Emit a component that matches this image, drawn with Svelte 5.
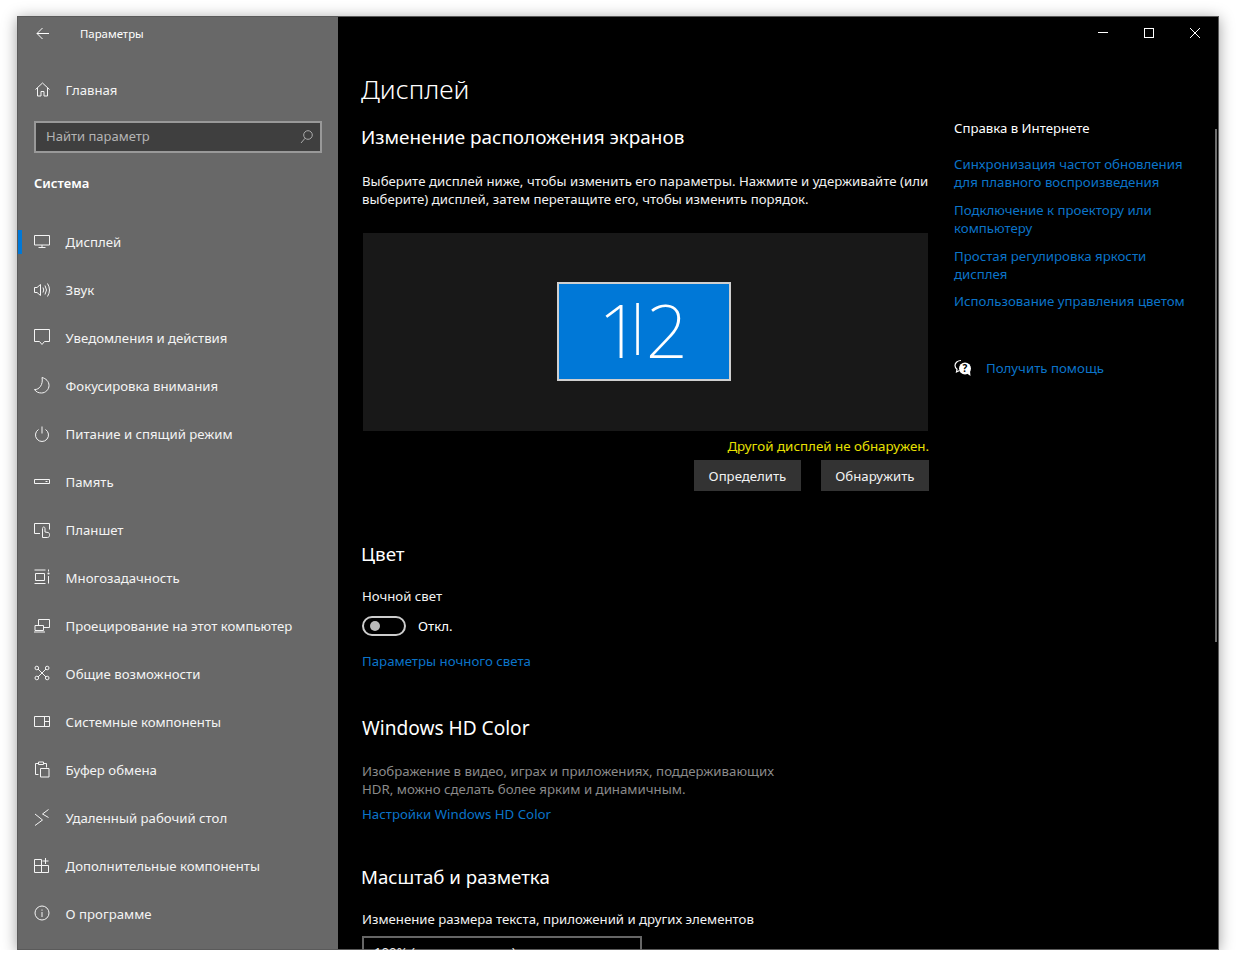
<script>
  const items = [
    { label: 'Дисплей', icon: 'display', active: true },
    { label: 'Звук', icon: 'sound' },
    { label: 'Уведомления и действия', icon: 'notify' },
    { label: 'Фокусировка внимания', icon: 'moon' },
    { label: 'Питание и спящий режим', icon: 'power' },
    { label: 'Память', icon: 'storage' },
    { label: 'Планшет', icon: 'tablet' },
    { label: 'Многозадачность', icon: 'multi' },
    { label: 'Проецирование на этот компьютер', icon: 'project' },
    { label: 'Общие возможности', icon: 'shared' },
    { label: 'Системные компоненты', icon: 'comps' },
    { label: 'Буфер обмена', icon: 'clip' },
    { label: 'Удаленный рабочий стол', icon: 'remote' },
    { label: 'Дополнительные компоненты', icon: 'extra' },
    { label: 'О программе', icon: 'info' }
  ];
  const paths = {
    display: 'M1.5 2.5h15v9.500h-15zM9 12v2.500M5.500 14.500h7',
    sound: 'M1.500 6.500h2.500l3.500-3v11l-3.500-3h-2.500zM10 6.500q1.500 2.500 0 5M12 4.500q3 4.500 0 9M14.500 2.500q4 6.500 0 13',
    notify: 'M1.500 .5h15v12h-5l-2.500 3-2.500-3h-5z',
    moon: 'M9 .5c4 1 7 4 7 8 0 4-3.500 7.500-7.500 7.500-3 0-5.500-1-7-3.500 4.500 .5 9-5 7.500-12z',
    power: 'M9 1.500v7M5.500 4.500a6.500 6.500 0 1 0 7 0',
    storage: 'M1.500 6.500h15v4h-15zM12.500 8.500h2',
    tablet: 'M7 12.500h-5.500v-10h15v6M9.500 16.500v-9c0-2 2.500-2 2.500 0v3.500l3 .5c1 .2 1.500 1 1.500 2v1c0 1-.8 2-2 2z',
    multi: 'M1.500 1h11M1.500 14.500h11M2.500 4.500h9v7h-9zM15.500 .5v2M15.500 7v7.500',
    project: 'M5.500 8v-5.500h11v8h-5.500M2 8.500h8.500v5h-8.500zM1 15h11',
    shared: 'M5 4l8 8M13 4l-8 8',
    comps: 'M1.500 3.500h15v10h-15zM11.500 3.500v10M11.500 8.500h5',
    clip: 'M5.500 13.500h-3v-11h3M10.500 2.500h3v4M5.500 3.500v-2.500h5v2.500zM7.500 7.500h8.500v8.500h-8.500z',
    remote: 'M2 5l7.500 6-7.500 5.500M15.500 .5l-6 4.500 6 3.500',
    extra: 'M1.500 2.500h7v6h-7zM1.500 8.500h7v7h-7zM8.500 8.500h7v7h-7zM12.500 1v6M9.500 4h6',
    info: 'M9 7v5M9 4.500v1.200'
  };
</script>

{#snippet icon(name)}
  <svg class="ico" width="18" height="18" viewBox="0 0 18 18" fill="none" stroke="currentColor" stroke-width="1">
    <path d={paths[name]} />
    {#if name === 'info'}<circle cx="9" cy="8" r="7" />{/if}
    {#if name === 'shared'}
      <circle cx="3.800" cy="3" r="1.800" /><circle cx="14.200" cy="3" r="1.800" /><circle cx="3.800" cy="13" r="1.800" /><circle cx="14.200" cy="13" r="1.800" />
    {/if}
    {#if name === 'multi'}<circle cx="15.500" cy="4.500" r="1.100" fill="currentColor" stroke="none" />{/if}
  </svg>
{/snippet}

<div class="window">
  <aside class="side">
    <div class="titlebar">
      <svg class="back" width="16" height="16" viewBox="0 0 16 16" fill="none" stroke="currentColor"><path d="M14 7.500H2M7.500 2L2 7.500 7.500 13" /></svg>
      <span>Параметры</span>
    </div>
    <div class="row home">
      <svg class="ico" width="18" height="18" viewBox="0 0 18 18" fill="none" stroke="currentColor"><path d="M2.500 8.500L9.500 2l7 6.500M4.500 7v8h3.500v-4.500h3v4.500h3.500v-8" /></svg>
      <span>Главная</span>
    </div>
    <div class="search">
      <span>Найти параметр</span>
      <svg width="16" height="16" viewBox="0 0 16 16" fill="none" stroke="currentColor"><circle cx="11" cy="6" r="4.300" /><path d="M8 9.300L4 14" /></svg>
    </div>
    <div class="group">Система</div>
    <nav>
      {#each items as it}
        <div class="row" class:active={it.active}>
          {@render icon(it.icon)}
          <span>{it.label}</span>
        </div>
      {/each}
    </nav>
  </aside>

  <main class="main">
    <div class="controls">
      <svg width="12" height="12" viewBox="0 0 12 12" stroke="currentColor" fill="none"><path d="M1 5.500h10" /></svg>
      <svg width="12" height="12" viewBox="0 0 12 12" stroke="currentColor" fill="none"><rect x="1.500" y="1.500" width="9" height="9" /></svg>
      <svg width="12" height="12" viewBox="0 0 12 12" stroke="currentColor" fill="none"><path d="M1 1l10 10M11 1L1 11" /></svg>
    </div>
    <div class="scrollbar"></div>
    <div class="cols">
      <section class="content">
        <h1>Дисплей</h1>
        <h2 class="first">Изменение расположения экранов</h2>
        <p class="intro">Выберите дисплей ниже, чтобы изменить его параметры. Нажмите и удерживайте (или<br />выберите) дисплей, затем перетащите его, чтобы изменить порядок.</p>
        <div class="stage"><div class="monitor"><span>1</span><span class="bar">|</span><span>2</span></div></div>
        <div class="warn">Другой дисплей не обнаружен.</div>
        <div class="buttons">
          <button>Определить</button>
          <button>Обнаружить</button>
        </div>
        <h2 class="color">Цвет</h2>
        <div class="label night">Ночной свет</div>
        <div class="toggle-row">
          <span class="toggle"><i></i></span>
          <span>Откл.</span>
        </div>
        <a class="link nl">Параметры ночного света</a>
        <h2 class="hd">Windows HD Color</h2>
        <p class="muted">Изображение в видео, играх и приложениях, поддерживающих<br />HDR, можно сделать более ярким и динамичным.</p>
        <a class="link hl">Настройки Windows HD Color</a>
        <h2 class="scale">Масштаб и разметка</h2>
        <div class="label sl">Изменение размера текста, приложений и других элементов</div>
        <div class="select">
          <span>100% (рекомендуется)</span>
          <svg width="12" height="8" viewBox="0 0 12 8" fill="none" stroke="#ddd"><path d="M1 1l5 5 5-5" /></svg>
        </div>
      </section>
      <section class="help">
        <div class="help-title">Справка в Интернете</div>
        <a class="link">Синхронизация частот обновления для плавного воспроизведения</a>
        <a class="link">Подключение к проектору или компьютеру</a>
        <a class="link tight">Простая регулировка яркости дисплея</a>
        <a class="link">Использование управления цветом</a>
        <div class="get">
          <svg width="18" height="18" viewBox="0 0 18 18"><path d="M7 1.500c-3.300 0-6 2.200-6 5 0 1.500.8 2.800 2 3.700L2.500 13l3-1.500" fill="none" stroke="#fff" stroke-width="1.200" /><circle cx="11" cy="9.500" r="6" fill="#fff" /><path d="M13 14.500l3.500 2.500-.5-5z" fill="#fff" /><text x="11" y="13" font-size="10" font-weight="700" text-anchor="middle" fill="#000" font-family="Noto Sans">?</text></svg>
          <a class="link">Получить помощь</a>
        </div>
      </section>
    </div>
  </main>
</div>

<style>
  :global(body) { background: #fff; }
  * { box-sizing: border-box; }
  .window {
    display: flex;
    width: 1202px;
    height: 934px;
    margin: 16px 0 0 17px;
    overflow: hidden;
    background: #000;
    color: #fff;
    font-family: "Noto Sans", sans-serif;
    font-size: 13.200px;
    box-shadow: 0 2px 14px rgba(0, 0, 0, .38);
    outline: 1px solid #5a5a5a;
    outline-offset: -1px;
  }
  .side { width: 321px; flex: none; background: #686868; }
  .titlebar { display: flex; align-items: center; height: 34px; padding: 1px 0 0 18px; gap: 29px; font-size: 11.400px; }
  .back { flex: none; }
  .row { display: flex; align-items: center; height: 48px; padding-left: 16px; gap: 14.600px; position: relative; color: #f4f4f4; }
  .row.active::before { content: ''; position: absolute; left: 1px; top: 12px; width: 4px; height: 24px; background: #0078d7; }
  .ico { flex: none; }
  .home { margin-top: 16px; }
  .search {
    display: flex; justify-content: space-between; align-items: center;
    margin: 7px 0 0 17px; width: 288px; height: 32px; padding: 0 7px 2px 10px;
    background: #3f3f3f; border: 2px solid #999; color: #b4b4b4; font-size: 13px;
  }
  .search svg { color: #aaa; margin-top: 2px; }
  .group { margin-top: 20px; padding-left: 17px; font-weight: 600; font-size: 13px; height: 20px; line-height: 20px; }
  nav { margin-top: 25px; }
  .main { flex: 1; position: relative; overflow: hidden; }
  .controls { position: absolute; top: 11px; right: 18px; display: flex; gap: 34px; }
  .scrollbar { position: absolute; right: 2px; top: 113px; width: 2px; height: 513px; background: #6e6e6e; }
  .cols { display: flex; padding: 0 0 0 24px; }
  .content { width: 567px; flex: none; }
  h1 { margin: 53px 0 0 -1px; font-size: 26.500px; font-weight: 300; line-height: 40px; }
  h2 { margin: 0 0 0 -1px; font-size: 18.900px; font-weight: 400; line-height: 28px; }
  .first { margin-top: 14px; }
  .intro { margin: 21px 0 0; line-height: 18px; white-space: nowrap; color: #f2f2f2; letter-spacing: .03px; }
  .stage { margin: 25px 0 0 1px; width: 565px; height: 198px; background: #181818; display: flex; justify-content: center; padding: 49px 3px 0 0; }
  .monitor { width: 174px; height: 99px; background: #0078d7; border: 2px solid #cfcfcf; display: flex; align-items: center; justify-content: center; padding: 0 2px 4px 0; font-size: 74px; font-weight: 200; line-height: 1; }
  .bar { font-size: 52px; font-weight: 300; margin: 0 -6px 0 -17px; transform: translateY(-8px); }
  .warn { margin-top: 6px; text-align: right; color: #e8e000; line-height: 18px; font-size: 13.350px; }
  .buttons { display: flex; justify-content: flex-end; gap: 20px; margin-top: 5px; }
  button { height: 31px; padding: 0 14.500px; border: 0; background: #333; color: #f2f2f2; font: inherit; }
  .color { margin-top: 49px; }
  .label { line-height: 18px; color: #f2f2f2; }
  .night { margin-top: 19px; }
  .toggle-row { display: flex; align-items: center; gap: 12px; margin-top: 11px; height: 20px; }
  .toggle { width: 44px; height: 20px; border: 2px solid #ccc; border-radius: 10px; display: flex; align-items: center; padding-left: 6px; }
  .toggle i { width: 10px; height: 10px; border-radius: 50%; background: #bbb; }
  .link { display: block; color: #0b74c9; line-height: 18px; font-size: 13.250px; }
  .nl { margin-top: 16px; }
  .hd { margin: 44px 0 0; font-size: 19.100px; }
  .muted { margin: 20px 0 0; line-height: 18px; color: #8a8a8a; font-size: 13.250px; }
  .hl { margin-top: 7px; }
  .scale { margin-top: 40px; font-size: 18.700px; }
  .sl { margin-top: 19px; }
  .select { margin-top: 8px; width: 280px; height: 40px; border: 2px solid #666; padding: 5px 8px 5px 10px; display: flex; justify-content: space-between; color: #f2f2f2; }
  .select svg { margin-top: 6px; }
  .help { margin-left: 25px; padding-top: 103px; width: 236px; }
  .help-title { line-height: 18px; margin-bottom: 18px; }
  .help .link { margin-bottom: 10px; }
  .help .tight { margin-bottom: 9px; }
  .get { display: flex; align-items: center; gap: 14px; margin-top: 49px; }
  .get .link { margin: 0; }
</style>
